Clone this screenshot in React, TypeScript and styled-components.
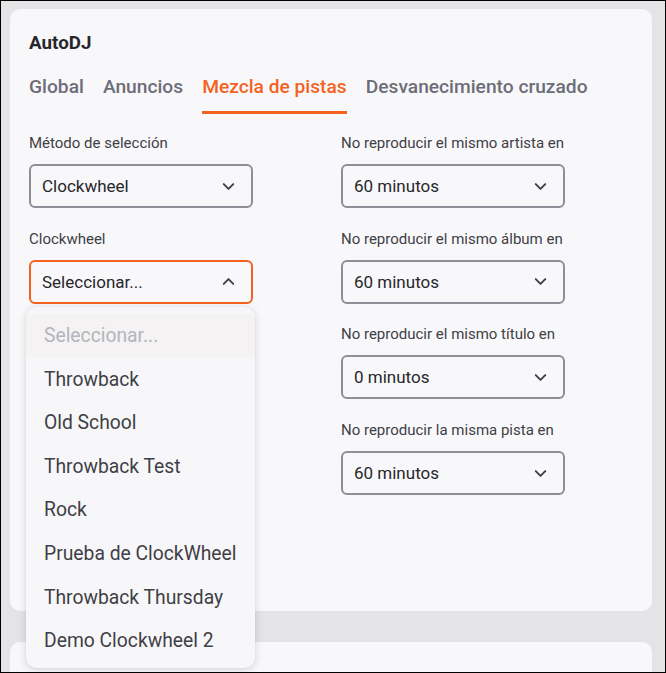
import styled, { createGlobalStyle } from "styled-components";
import { ChevronDown, ChevronUp } from "lucide-react";

const GlobalStyle = createGlobalStyle`
  html, body {
    margin: 0;
    padding: 0;
  }
  body {
    font-family: Roboto, "Liberation Sans", sans-serif;
    -webkit-font-smoothing: antialiased;
  }
  * {
    box-sizing: border-box;
  }
`;

const ORANGE = "#f4621f";

const Page = styled.div`
  width: 666px;
  height: 673px;
  border: 1px solid #000;
  background: #e4e4e7;
  padding: 8px 13px 0 9px;
  display: flex;
  flex-direction: column;
  gap: 31px;
  overflow: hidden;
`;

const Card = styled.section<{ $height?: number; $top?: number }>`
  background: #f8f8fa;
  border-radius: 10px;
  padding: ${(p) => p.$top ?? 22}px 19px 0 19px;
  flex-shrink: 0;
  height: ${(p) => (p.$height ? `${p.$height}px` : "auto")};
  flex-grow: ${(p) => (p.$height ? 0 : 1)};
`;

const Title = styled.h2`
  margin: 0;
  font-size: 18.8px;
  line-height: 24px;
  font-weight: 700;
  color: #27272a;
`;

const Tabs = styled.nav`
  display: flex;
  gap: 19px;
  margin-top: 20px;
`;

const Tab = styled.div<{ $active?: boolean }>`
  font-size: 19.2px;
  line-height: 24px;
  font-weight: 500;
  color: ${(p) => (p.$active ? ORANGE : "#6d6d78")};
  padding-bottom: 12px;
  border-bottom: 3px solid ${(p) => (p.$active ? ORANGE : "transparent")};
`;

const Form = styled.div`
  display: grid;
  grid-template-columns: 224px 224px;
  column-gap: 88px;
  margin-top: 19px;
`;

const Column = styled.div`
  display: flex;
  flex-direction: column;
  gap: 20.7px;
`;

const Field = styled.div`
  display: flex;
  flex-direction: column;
  gap: 11px;
  position: relative;
`;

const Label = styled.label`
  font-size: 15px;
  line-height: 20px;
  color: #3f3f46;
  white-space: nowrap;
`;

const SelectBox = styled.div<{ $open?: boolean }>`
  height: 44px;
  border: 2px solid ${(p) => (p.$open ? ORANGE : "#8e8e96")};
  border-radius: 6px;
  display: flex;
  align-items: center;
  justify-content: space-between;
  padding: 0 13px 0 11px;
  font-size: 17px;
  color: #27272a;
`;

const Menu = styled.ul`
  position: absolute;
  left: -3px;
  top: 78px;
  width: 229px;
  margin: 0;
  padding: 7px 0 6px;
  list-style: none;
  background: #f7f7f9;
  border-radius: 10px;
  box-shadow: 0 2px 8px rgba(0, 0, 0, 0.14), 0 0 1px rgba(0, 0, 0, 0.12);
  z-index: 10;
`;

const Option = styled.li<{ $placeholder?: boolean }>`
  height: 43.6px;
  display: flex;
  align-items: center;
  padding-left: 18px;
  font-size: 19.3px;
  white-space: nowrap;
  color: ${(p) => (p.$placeholder ? "#b5b5bc" : "#3f3f46")};
  background: ${(p) => (p.$placeholder ? "#f4f2f2" : "transparent")};
`;

const options = [
  "Throwback",
  "Old School",
  "Throwback Test",
  "Rock",
  "Prueba de ClockWheel",
  "Throwback Thursday",
  "Demo Clockwheel 2",
];

const rightFields = [
  "No reproducir el mismo artista en",
  "No reproducir el mismo álbum en",
  "No reproducir el mismo título en",
  "No reproducir la misma pista en",
];

const rightValues = ["60 minutos", "60 minutos", "0 minutos", "60 minutos"];

function Select({ value, open }: { value: string; open?: boolean }) {
  return (
    <SelectBox $open={open}>
      <span>{value}</span>
      {open ? (
        <ChevronUp size={19} strokeWidth={2.4} color="#3f3f46" />
      ) : (
        <ChevronDown size={19} strokeWidth={2.4} color="#3f3f46" />
      )}
    </SelectBox>
  );
}

export default function App() {
  return (
    <>
      <GlobalStyle />
      <Page>
        <Card $height={602}>
          <Title>AutoDJ</Title>
          <Tabs>
            <Tab>Global</Tab>
            <Tab>Anuncios</Tab>
            <Tab $active>Mezcla de pistas</Tab>
            <Tab>Desvanecimiento cruzado</Tab>
          </Tabs>
          <Form>
            <Column>
              <Field>
                <Label>Método de selección</Label>
                <Select value="Clockwheel" />
              </Field>
              <Field>
                <Label>Clockwheel</Label>
                <Select value="Seleccionar..." open />
                <Menu>
                  <Option $placeholder>Seleccionar...</Option>
                  {options.map((o) => (
                    <Option key={o}>{o}</Option>
                  ))}
                </Menu>
              </Field>
            </Column>
            <Column>
              {rightFields.map((label, i) => (
                <Field key={label}>
                  <Label>{label}</Label>
                  <Select value={rightValues[i]} />
                </Field>
              ))}
            </Column>
          </Form>
        </Card>
        <Card $top={26}>
          <Title>Reglas</Title>
        </Card>
      </Page>
    </>
  );
}
